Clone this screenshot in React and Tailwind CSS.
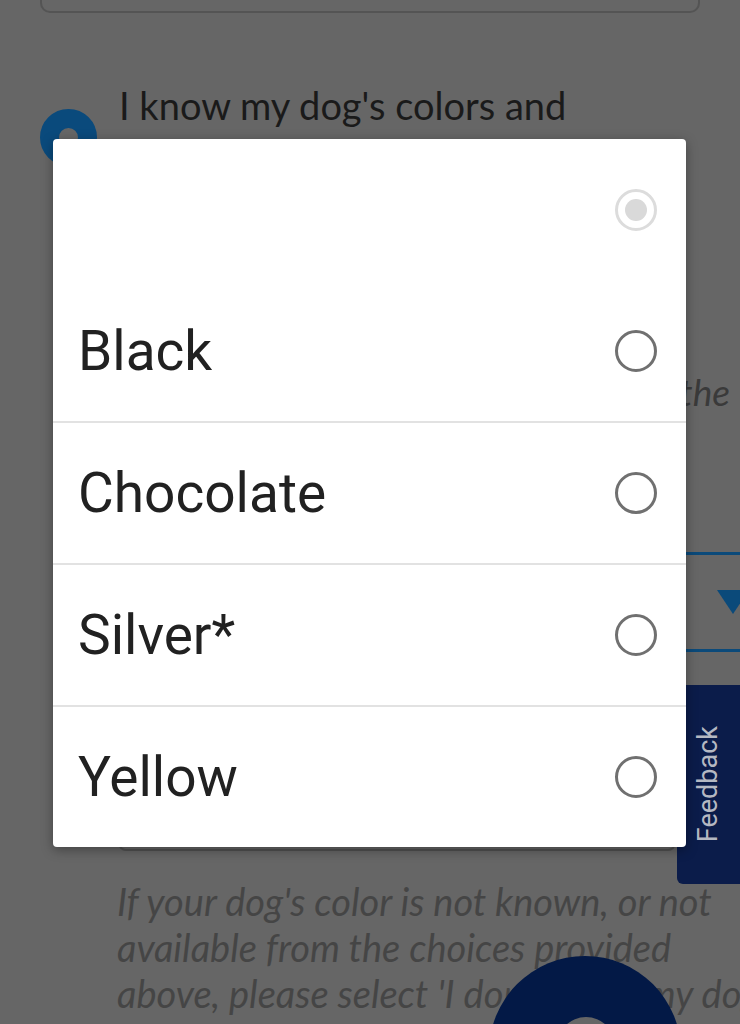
import React from "react";

const colors = ["Black", "Chocolate", "Silver*", "Yellow"];

const Radio = ({ disabled = false }) =>
  disabled ? (
    <span className="flex h-[42px] w-[42px] items-center justify-center rounded-full border-[3px] border-[#dcdcdc]">
      <span className="h-[22px] w-[22px] rounded-full bg-[#d9d9d9]" />
    </span>
  ) : (
    <span className="h-[42px] w-[42px] rounded-full border-[3px] border-[#707070]" />
  );

export default function App() {
  return (
    <div className="relative h-[1024px] w-[740px] overflow-hidden bg-[#666666] font-['Lato','Liberation_Sans',sans-serif]">
      {/* Page behind the dialog (dimmed) */}
      <div className="ml-[40px] h-[13px] w-[660px] rounded-b-[10px] border-x-2 border-b-2 border-[#545454]" />

      <div className="mt-[70px] flex items-start pl-[40px]">
        <span className="mt-[26px] h-[57px] w-[57px] shrink-0 rounded-full border-[19px] border-[#0a4a7c]" />
        <span className="ml-[22px] whitespace-nowrap text-[38px] leading-[1.2] text-[#1a1a1a]">
          I know my dog's colors and
        </span>
      </div>

      <div className="mt-[204px] pr-[10px] text-right text-[37px] italic leading-[1.2] text-[#3a3a3a]">
        the
      </div>

      <div className="ml-[117px] mt-[138px] flex h-[100px] w-[660px] items-center justify-end rounded-[4px] border-[3px] border-[#0b4a7a] pr-[25px]">
        <svg width="32" height="24" viewBox="0 0 32 24">
          <polygon points="0,0 32,0 16,24" fill="#0b4a7a" />
        </svg>
      </div>

      <div className="ml-[118px] mt-[79px] h-[120px] w-[558px] rounded-[8px] border-2 border-[#505050]" />

      <div className="ml-[117px] mt-[27px] whitespace-nowrap text-[38px] italic leading-[46px] text-[#454545]">
        <div>If your dog's color is not known, or not</div>
        <div>available from the choices provided</div>
        <div>above, please select 'I don't know my dog's color'</div>
      </div>

      {/* Feedback tab */}
      <div className="absolute right-0 top-[685px] flex h-[199px] w-[63px] items-center justify-center rounded-l-[6px] bg-[#0b1c4a]">
        <span className="rotate-180 text-[27px] leading-none text-[#b4b8c2] [writing-mode:vertical-rl] font-['Roboto',sans-serif]">
          Feedback
        </span>
      </div>

      {/* Floating action button */}
      <div className="absolute left-[489px] top-[956px] h-[192px] w-[192px] rounded-full bg-[#031946]" />
      <div className="absolute left-[557px] top-[1017px] h-[58px] w-[58px] rounded-full bg-[#666666]" />

      {/* Dialog */}
      <div className="absolute left-[53px] top-[139px] w-[633px] overflow-hidden rounded-[4px] bg-white font-['Roboto',sans-serif] shadow-[0_3px_12px_rgba(0,0,0,0.35)]">
        <div className="flex h-[142px] items-center justify-end pr-[29px]">
          <Radio disabled />
        </div>
        {colors.map((c, i) => (
          <div
            key={c}
            className={`flex h-[140px] items-center justify-between pl-[25px] pr-[29px] ${
              i > 0 ? "box-content border-t-2 border-[#e2e2e2]" : ""
            }`}
          >
            <span className="text-[55px] leading-none text-[#212121]">{c}</span>
            <Radio />
          </div>
        ))}
      </div>
    </div>
  );
}
